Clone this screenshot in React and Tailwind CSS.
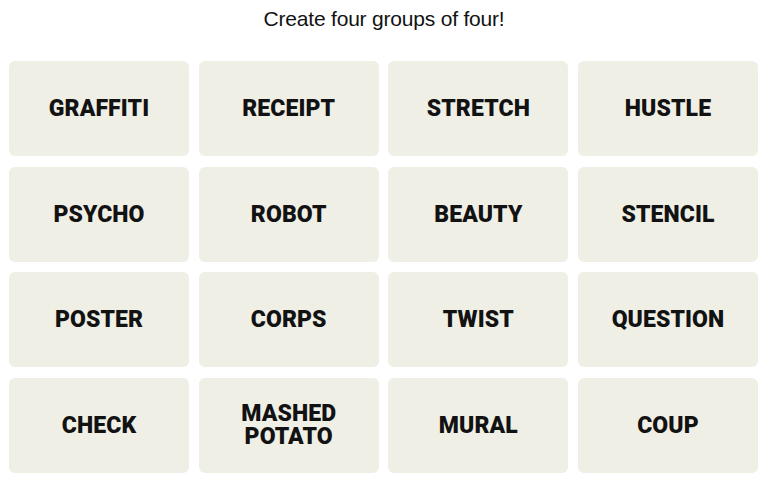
import React from 'react';

const words = [
  'GRAFFITI', 'RECEIPT', 'STRETCH', 'HUSTLE',
  'PSYCHO', 'ROBOT', 'BEAUTY', 'STENCIL',
  'POSTER', 'CORPS', 'TWIST', 'QUESTION',
  'CHECK', 'MASHED POTATO', 'MURAL', 'COUP',
];

export default function App() {
  return (
    <div className="w-[768px] h-[483px] bg-white font-['Roboto','Liberation_Sans',sans-serif] text-black">
      <p className="pt-[6px] text-center text-[21px] leading-[26px] text-[#121212] font-['Liberation_Sans',sans-serif] tracking-[-0.2px]">
        Create four groups of four!
      </p>
      <div className="mt-[29px] ml-[9px] w-[749px] grid grid-cols-4 gap-x-[9.67px] gap-y-[10.67px]">
        {words.map((w) => (
          <div
            key={w}
            className="h-[95px] rounded-[6px] bg-[#efefe6] flex items-center justify-center px-4 text-center"
          >
            <span className="text-[23px] leading-[23px] font-black tracking-[0.1px] text-[#121212] whitespace-pre-line">
              {w === 'MASHED POTATO' ? 'MASHED\nPOTATO' : w}
            </span>
          </div>
        ))}
      </div>
    </div>
  );
}
